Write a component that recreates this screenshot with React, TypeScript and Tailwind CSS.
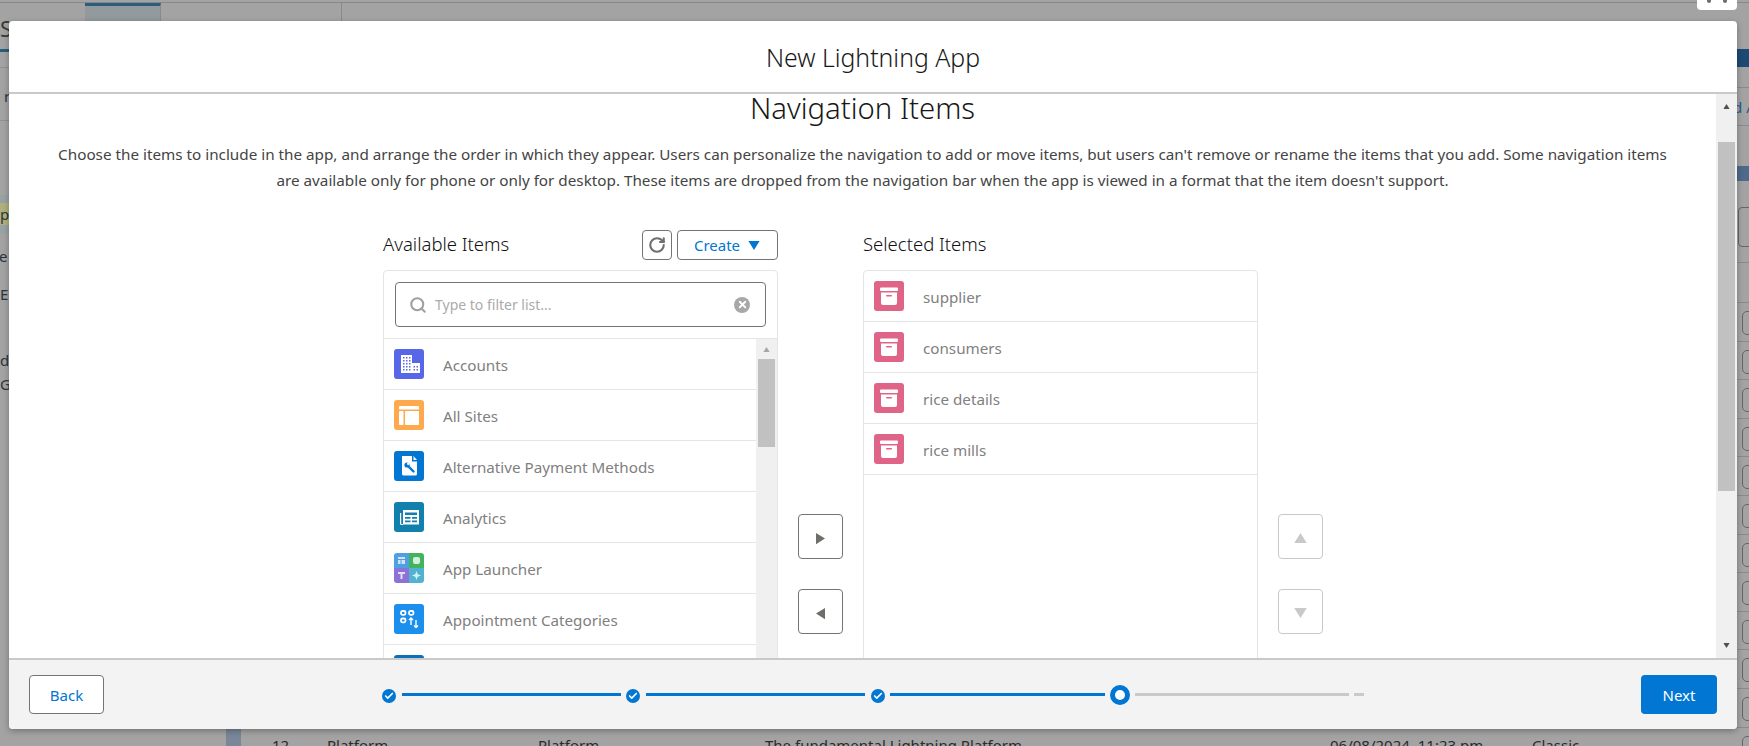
import React from 'react';
import { Search, RotateCw, Check, X } from 'lucide-react';

const Tile: React.FC<{ bg: string; children?: React.ReactNode }> = ({ bg, children }) => (
  <div className={`w-[30px] h-[30px] rounded-[3px] shrink-0 overflow-hidden ${bg}`}>
    <svg viewBox="0 0 30 30" className="w-[30px] h-[30px] block">{children}</svg>
  </div>
);

const AccountsIcon = () => (
  <Tile bg="bg-[#5867e8]">
    <path fill="#fff" d="M7 6h11v18H7z" />
    <path fill="#fff" d="M17 14h9v10h-9z" />
    <g fill="#5867e8">
      <path d="M9 8h1.500v1.500H9zM12 8h1.500v1.500H12zM15 8h1.500v1.500H15zM9 11h1.500v1.500H9zM12 11h1.500v1.500H12zM15 11h1.500v1.500H15zM9 14h1.500v1.500H9zM12 14h1.500v1.500H12zM15 14h1.500v1.500H15zM9 17h1.500v1.500H9zM12 17h1.500v1.500H12zM15 17h1.500v1.500H15zM9 20h1.500v1.500H9zM12 20h1.500v1.500H12zM15 20h1.500v1.500H15z" />
      <path d="M19.500 17h1.500v1.500h-1.500zM22.500 17h1.500v1.500h-1.500zM19.500 20h1.500v1.500h-1.500zM22.500 20h1.500v1.500h-1.500z" />
    </g>
  </Tile>
);

const SitesIcon = () => (
  <Tile bg="bg-[#ffa94e]">
    <rect x="5" y="6" width="20" height="3.500" rx="0.800" fill="#fff" />
    <rect x="5" y="11" width="4.500" height="14" rx="0.800" fill="#fff" />
    <rect x="11" y="11" width="14" height="14" rx="0.800" fill="#fff" />
  </Tile>
);

const PaymentIcon = () => (
  <Tile bg="bg-[#0176d3]">
    <path fill="#fff" d="M8 5h10v5.500h5V23a1.500 1.500 0 0 1-1.500 1.500h-12A1.500 1.500 0 0 1 8 23z" />
    <path fill="#fff" d="M19.500 5l3.500 4h-3.500z" />
    <path stroke="#0176d3" strokeWidth="2.400" strokeLinecap="round" d="M13.500 14.500l6 6" />
    <circle cx="13" cy="14" r="2.600" fill="#0176d3" />
    <circle cx="14.200" cy="12.800" r="1.200" fill="#fff" />
  </Tile>
);

const AnalyticsIcon = () => (
  <Tile bg="bg-[#1280ad]">
    <path fill="#fff" d="M9 8h16v14.500H9z" />
    <path stroke="#fff" strokeWidth="1.200" fill="none" d="M6.600 11v10.500a1 1 0 0 0 1 1H9" />
    <path fill="#1280ad" d="M11 10.500h12V13H11zM11 15h5.500v1.700H11zM18 15h5v1.700h-5zM11 18.500h5.500v1.700H11zM18 18.500h5v1.700h-5z" />
  </Tile>
);

const LauncherIcon = () => (
  <div className="w-[30px] h-[30px] rounded-[3px] shrink-0 overflow-hidden grid grid-cols-2 grid-rows-2">
    <div className="bg-[#4f9fe3] flex items-center justify-center">
      <svg viewBox="0 0 15 15" className="w-[15px] h-[15px]"><path fill="#cfe4f8" d="M4 4h7v2H4zM4 7h2.500v4H4zM7.500 7H11v4H7.500z" /></svg>
    </div>
    <div className="bg-[#44b35f] flex items-center justify-center">
      <svg viewBox="0 0 15 15" className="w-[15px] h-[15px]"><rect x="4" y="4" width="7" height="7" rx="2" fill="#d5f0da" /></svg>
    </div>
    <div className="bg-[#8c72d4] flex items-center justify-center">
      <svg viewBox="0 0 15 15" className="w-[15px] h-[15px]"><path fill="#e4dcf6" d="M4 4h7v2H8.500v5h-2V6H4z" /></svg>
    </div>
    <div className="bg-[#52b3d1] flex items-center justify-center">
      <svg viewBox="0 0 15 15" className="w-[15px] h-[15px]"><path fill="#d6f0f6" d="M7.500 3l1.200 3.300L12 7.500 8.700 8.700 7.500 12 6.300 8.700 3 7.500l3.300-1.200z" /></svg>
    </div>
  </div>
);

const CategoriesIcon = () => (
  <Tile bg="bg-[#1b8fee]">
    <g fill="none" stroke="#fff" strokeWidth="1.800">
      <rect x="7" y="7" width="4.500" height="3.800" rx="1.500" />
      <rect x="15" y="7" width="4.500" height="3.800" rx="1.500" />
      <rect x="7" y="14.500" width="4.500" height="3.800" rx="1.500" />
    </g>
    <path fill="none" stroke="#fff" strokeWidth="1.400" d="M17 21v-6.500M15 16l2-2 2 2M22 16v7.500M20 21.500l2 2 2-2" />
  </Tile>
);

const ArchiveIcon = () => (
  <Tile bg="bg-[#e06488]">
    <rect x="6" y="6.500" width="18" height="3.500" rx="1" fill="#fff" />
    <path fill="#fff" d="M7 11.500h16V22a2 2 0 0 1-2 2H9a2 2 0 0 1-2-2z" />
    <rect x="12" y="14" width="6" height="1.500" rx="0.700" fill="#e06488" />
  </Tile>
);

const Row: React.FC<{ icon: React.ReactNode; label: string }> = ({ icon, label }) => (
  <div className="h-[51px] shrink-0 border-b border-[#e5e5e5] flex items-center pl-[10px] pb-[1px]">
    {icon}
    <span className="ml-[19px] mt-[4px] text-[15.200px] text-[#808080]">{label}</span>
  </div>
);

const available = [
  { label: 'Accounts', icon: <AccountsIcon /> },
  { label: 'All Sites', icon: <SitesIcon /> },
  { label: 'Alternative Payment Methods', icon: <PaymentIcon /> },
  { label: 'Analytics', icon: <AnalyticsIcon /> },
  { label: 'App Launcher', icon: <LauncherIcon /> },
  { label: 'Appointment Categories', icon: <CategoriesIcon /> },
  { label: '', icon: <Tile bg="bg-[#0c6fb8]" /> },
];

const selected = ['supplier', 'consumers', 'rice details', 'rice mills'];

const Caret: React.FC<{ dir: 'up' | 'down' | 'left' | 'right'; className: string }> = ({ dir, className }) => {
  const points = {
    up: '0,8 5,0 10,8',
    down: '0,0 10,0 5,8',
    left: '8,0 8,10 0,5',
    right: '0,0 8,5 0,10',
  }[dir];
  return (
    <svg viewBox={dir === 'up' || dir === 'down' ? '0 0 10 8' : '0 0 8 10'} className={className}>
      <polygon points={points} fill="currentColor" />
    </svg>
  );
};

const SideButton: React.FC<{ dir: 'up' | 'down' | 'left' | 'right'; off?: boolean }> = ({ dir, off }) => (
  <button className={`w-[45px] h-[45px] rounded-[4px] border bg-white flex items-center justify-center pt-[3px] ${off ? 'border-[#c9c9c9]' : 'border-[#747474]'}`}>
    <Caret dir={dir} className={dir === 'up' || dir === 'down' ? 'w-[13px] h-[10px] text-[#c9c9c9]' : 'w-[9px] h-[13px] text-[#706e6b]'} />
  </button>
);

const Done = () => (
  <span className="w-[14px] h-[14px] rounded-full bg-[#0176d3] flex items-center justify-center shrink-0 mt-[3px]">
    <Check className="w-[10px] h-[10px] text-white" strokeWidth={4} />
  </span>
);

const Stepper = () => (
  <div className="flex items-center w-[990px]">
    <Done />
    <div className="ml-[6px] w-[219px] h-[3px] bg-[#0176d3]" />
    <div className="ml-[5px]"><Done /></div>
    <div className="ml-[6px] w-[219px] h-[3px] bg-[#0176d3]" />
    <div className="ml-[6px]"><Done /></div>
    <div className="ml-[5px] w-[215px] h-[3px] bg-[#0176d3]" />
    <span className="ml-[5px] w-[20px] h-[20px] rounded-full border-[5px] border-[#0176d3] bg-white shrink-0" />
    <div className="ml-[5px] w-[214px] h-[3px] bg-[#c9c9c9]" />
    <div className="ml-[5px] w-[10px] h-[3px] bg-[#c9c9c9]" />
  </div>
);

const DualList = () => (
  <div className="flex mt-[37px] ml-[374px]">
    <div className="w-[395px] shrink-0">
      <div className="h-[30px] flex items-center">
        <span className="text-[18.500px] font-light text-[#111111] flex-1 -mt-[2px]">Available Items</span>
        <button className="w-[30px] h-[30px] rounded-[4px] border border-[#747474] flex items-center justify-center">
          <RotateCw className="w-[18px] h-[18px] text-[#706e6b]" strokeWidth={2.800} />
        </button>
        <button className="ml-[5px] w-[101px] h-[30px] rounded-[4px] border border-[#747474] flex items-center justify-center gap-[7px] text-[15px] text-[#0176d3]">
          Create
          <Caret dir="down" className="w-[14px] h-[9px]" />
        </button>
      </div>
      <div className="mt-[10px] h-[400px] border border-[#e5e5e5] rounded-t-[4px] overflow-hidden flex flex-col">
        <div className="h-[68px] shrink-0 border-b border-[#e5e5e5] px-[11px] pt-[11px]">
          <div className="h-[45px] rounded-[4px] border border-[#747474] flex items-center pl-[13px] pr-[15px]">
            <Search className="w-[18px] h-[18px] text-[#a0a0a0]" strokeWidth={2.800} />
            <span className="ml-[8px] flex-1 text-[14px] text-[#ababab]">Type to filter list...</span>
            <span className="w-[16px] h-[16px] rounded-full bg-[#a8a8a8] flex items-center justify-center">
              <X className="w-[11px] h-[11px] text-white" strokeWidth={4} />
            </span>
          </div>
        </div>
        <div className="flex flex-1 min-h-0">
          <div className="flex-1 flex flex-col">
            {available.map((item, i) => (
              <Row key={i} icon={item.icon} label={item.label} />
            ))}
          </div>
          <div className="w-[21px] shrink-0 bg-[#f0f0f0] flex flex-col items-center">
            <Caret dir="up" className="w-[9px] h-[5px] mt-[8px] text-[#a6a6a6]" />
            <div className="w-[17px] h-[88px] mt-[7px] bg-[#c1c1c1]" />
          </div>
        </div>
      </div>
    </div>

    <div className="w-[85px] shrink-0 pl-[20px] pt-[284px] flex flex-col gap-[30px]">
      <SideButton dir="right" />
      <SideButton dir="left" />
    </div>

    <div className="w-[395px] shrink-0">
      <div className="h-[30px] flex items-center">
        <span className="text-[18.500px] font-light text-[#111111] -mt-[2px]">Selected Items</span>
      </div>
      <div className="mt-[10px] h-[400px] border border-[#e5e5e5] rounded-t-[4px] overflow-hidden">
        {selected.map((name) => (
          <Row key={name} icon={<ArchiveIcon />} label={name} />
        ))}
      </div>
    </div>

    <div className="pl-[20px] pt-[284px] flex flex-col gap-[30px]">
      <SideButton dir="up" off />
      <SideButton dir="down" off />
    </div>
  </div>
);

const Modal = () => (
  <div className="absolute left-[9px] top-[21px] w-[1728px] h-[708px] bg-white rounded-[4px] shadow-[0_2px_6px_rgba(0,0,0,0.3)] flex flex-col overflow-hidden">
    <div className="h-[73px] shrink-0 border-b-2 border-[#c9c9c9] flex items-center justify-center pt-[2px]">
      <h1 className="text-[24.800px] font-light text-[#181818]">New Lightning App</h1>
    </div>
    <div className="flex-1 min-h-0 flex">
      <div className="flex-1 min-w-0 overflow-hidden">
        <h2 className="text-[29.300px] font-light leading-[34px] text-center text-[#181818] -mt-[3px]">Navigation Items</h2>
        <p className="mt-[17px] text-[15.260px] leading-[25.500px] text-center text-[#444444] whitespace-nowrap">
          Choose the items to include in the app, and arrange the order in which they appear. Users can personalize the navigation to add or move items, but users can't remove or rename the items that you add. Some navigation items
          <br />
          are available only for phone or only for desktop. These items are dropped from the navigation bar when the app is viewed in a format that the item doesn't support.
        </p>
        <DualList />
      </div>
      <div className="w-[21px] shrink-0 bg-[#f0f0f0] flex flex-col items-center relative">
        <Caret dir="up" className="w-[9px] h-[5px] mt-[10px] text-[#505050]" />
        <div className="w-[17px] h-[349px] mt-[33px] bg-[#c1c1c1]" />
        <Caret dir="down" className="w-[9px] h-[5px] mt-auto mb-[10px] text-[#505050]" />
      </div>
    </div>
    <div className="h-[71px] shrink-0 border-t-2 border-[#c9c9c9] bg-[#f3f3f3] flex items-center pl-[20px] pr-[20px]">
      <button className="w-[75px] h-[39px] rounded-[4px] border border-[#747474] bg-white text-[15px] text-[#0176d3] pt-[2px]">Back</button>
      <div className="ml-[278px]"><Stepper /></div>
      <button className="ml-auto w-[76px] h-[39px] rounded-[4px] bg-[#0176d3] text-[15px] text-white pt-[2px]">Next</button>
    </div>
  </div>
);

const LeftStrip = () => (
  <div className="w-[9px] shrink-0 overflow-hidden text-[#2b3440] text-[15px] leading-[20px]">
    <div className="h-[2px]" />
    <div className="h-[1px] bg-[#888888]" />
    <div className="h-[46px] pt-[10px] text-[22px] leading-[30px] text-[#3a3a3a]">S</div>
    <div className="h-[3px] bg-[#2b5d7d]" />
    <div className="h-[15px]" />
    <div className="h-[1px] bg-[#909090]" />
    <div className="h-[52px] pt-[18px] pl-[4px]">r</div>
    <div className="h-[1px] bg-[#909090]" />
    <div className="h-[74px]" />
    <div className="h-[8px] bg-[#98a2a6]" />
    <div className="h-[22px] bg-[#b0b07c] leading-[22px]">p</div>
    <div className="h-[9px] bg-[#98a2a6]" />
    <div className="h-[39px] pt-[12px]"><span className="block -ml-[1px]">e</span></div>
    <div className="h-[75px] pt-[11px]">E</div>
    <div className="h-[24px] leading-[24px]">d</div>
    <div className="h-[24px] leading-[24px]">G</div>
  </div>
);

const RightStrip = () => (
  <div className="w-[12px] shrink-0 overflow-hidden">
    <div className="h-[2px]" />
    <div className="h-[1px] bg-[#888888]" />
    <div className="h-[46px]" />
    <div className="h-[18px] bg-[#1d4a73]" />
    <div className="h-[21px] border-b border-[#8a8a8a]" />
    <div className="h-[38px] border-b border-[#8a8a8a] text-[15px] leading-[38px] text-[#1d5c94] whitespace-nowrap -indent-[4px]">d A</div>
    <div className="h-[40px]" />
    <div className="h-[15px] bg-[#4e6a8a]" />
    <div className="h-[82px] pt-[26px] border-b border-[#8a8a8a]">
      <div className="ml-[1px] w-[20px] h-[40px] border border-[#666666] rounded-l-[4px]" />
    </div>
    <div className="h-[40px] border-b border-[#8a8a8a]" />
    {Array.from({ length: 12 }).map((_, i) => (
      <div key={i} className="h-[38.600px] pt-[8px] border-b border-[#8a8a8a]">
        <div className="ml-[5px] w-[20px] h-[24px] border border-[#666666] rounded-l-[5px]" />
      </div>
    ))}
  </div>
);

const TopStrip = () => (
  <div className="h-[21px] shrink-0 border-t border-[#888888] mt-[2px] flex">
    <div className="ml-[76px] w-[76px] h-full border-t-[3px] border-[#2b5d7d] bg-[#929a9e] border-r border-r-[#8a8a8a]" />
    <div className="ml-[180px] w-[1px] h-full bg-[#8a8a8a]" />
    <div className="ml-auto mr-0 w-[40px] -mt-[3px] h-[10px] rounded-b-[4px] bg-white flex justify-center gap-[12px]">
      <span className="w-[4px] h-[3px] rounded-b-full bg-[#706e6b]" />
      <span className="w-[4px] h-[3px] rounded-b-full bg-[#706e6b]" />
    </div>
  </div>
);

const BottomStrip = () => (
  <div className="h-[17px] shrink-0 flex text-[15px] leading-[20px] text-[#2b2b2b] overflow-hidden whitespace-nowrap">
    <div className="ml-[217px] w-[15px] h-full bg-[#7a8799]" />
    <span className="ml-[31px] w-[55px] pt-[6px]">12</span>
    <span className="w-[211px] pt-[6px]">Platform</span>
    <span className="w-[227px] pt-[6px]">Platform</span>
    <span className="w-[565px] pt-[6px]">The fundamental Lightning Platform</span>
    <span className="w-[202px] pt-[6px]">06/08/2024, 11:23 pm</span>
    <span className="pt-[6px]">Classic</span>
  </div>
);

export default function App() {
  return (
    <div className="relative w-[1749px] h-[746px] overflow-hidden bg-[#a3a3a3] font-['Noto_Sans',sans-serif]">
      <div className="flex h-full">
        <LeftStrip />
        <div className="flex-1 min-w-0 flex flex-col justify-between">
          <TopStrip />
          <BottomStrip />
        </div>
        <RightStrip />
      </div>
      <Modal />
    </div>
  );
}
